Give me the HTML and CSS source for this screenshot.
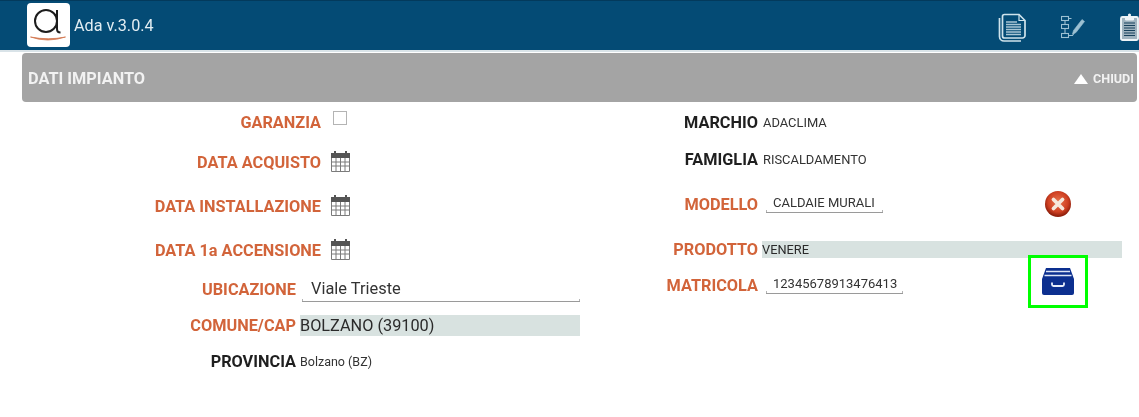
FILE: index.html
```html
<!DOCTYPE html>
<html lang="it">
<head>
<meta charset="utf-8">
<title>Ada</title>
<link rel="stylesheet" href="styles.css">
</head>
<body>
<header class="topbar">
  <div class="brand">
    <div class="logo">
      <svg width="43" height="44" viewBox="0 0 43 44">
        <circle cx="19" cy="18" r="11" fill="none" stroke="#1c1c1c" stroke-width="2"/>
        <path d="M30 7v19q0 3.500 3.500 3.500" fill="none" stroke="#1c1c1c" stroke-width="2"/>
        <path d="M3.500 34q17 6 35 0q-17 3.500-35 0z" fill="#d2764f" stroke="#d2764f" stroke-width=".8"/>
      </svg>
    </div>
    <span class="version">Ada v.3.0.4</span>
  </div>
  <nav class="tools">
    <svg class="tool-doc" width="29" height="30" viewBox="0 0 29 30" fill="none" stroke="#cfe3ec">
      <path d="M6.500 2.500h14.500l6 6v15a2.500 2.500 0 0 1-2.500 2.500H6.500a2 2 0 0 1-2-2V4.500a2 2 0 0 1 2-2z" stroke-width="1.700"/>
      <path d="M1.500 6v18.500a4.500 4.500 0 0 0 4.500 4.500h17" stroke-width="1.700"/>
      <path d="M21 2.500v6h6" stroke-width="1.200"/>
      <path d="M8 10h11M8 12.500h15M8 15h15M8 17.500h15M8 20h15M8 22.500h15" stroke="#a9c6d5" stroke-width="1.300"/>
    </svg>
    <svg class="tool-flow" width="24" height="24" viewBox="0 0 24 24" fill="none" stroke="#9cc0d2" stroke-width="1.100">
      <rect x=".500" y="1.500" width="7" height="4"/>
      <rect x=".500" y="9.500" width="7" height="4"/>
      <rect x=".500" y="18.500" width="7" height="4"/>
      <path d="M4 5.500v4M4 13.500v5M7.500 20.500h4l2-3M7.500 3.500h3"/>
      <path d="M12.500 15.500l8.500-11 2.500 2-8.500 11-3.500 1.500z" fill="#9cc0d2" stroke-width=".6"/>
    </svg>
    <svg class="tool-clip" width="19" height="28" viewBox="0 0 19 28" fill="none" stroke="#eef4f7">
      <rect x="1" y="4" width="17" height="23" rx="1.500" fill="#9fb3bf" stroke-width="1.900"/>
      <path d="M5.500 3.500h8V7h-8z" fill="#eef4f7"/>
      <circle cx="9.500" cy="2" r="1.600" fill="#eef4f7" stroke="none"/>
      <path d="M4 10h11M4 12.500h11M4 15h11M4 17.500h11M4 20h11M4 22.500h11" stroke="#17415c" stroke-width="1.100"/>
    </svg>
  </nav>
</header>

<section class="panel">
  <h2 class="panel-title">DATI IMPIANTO</h2>
  <div class="panel-close"><span class="triangle"></span>CHIUDI</div>
</section>

<main class="form">
  <div class="col col-left">
    <div class="row">
      <span class="label accent">GARANZIA</span>
      <span class="checkbox"></span>
    </div>
    <div class="row">
      <span class="label accent">DATA ACQUISTO</span>
      <svg class="cal" width="21" height="22" viewBox="0 0 21 22"><use href="#calendar"/></svg>
    </div>
    <div class="row">
      <span class="label accent">DATA INSTALLAZIONE</span>
      <svg class="cal" width="21" height="22" viewBox="0 0 21 22"><use href="#calendar"/></svg>
    </div>
    <div class="row">
      <span class="label accent">DATA 1a ACCENSIONE</span>
      <svg class="cal" width="21" height="22" viewBox="0 0 21 22"><use href="#calendar"/></svg>
    </div>
    <div class="row row-short">
      <span class="label accent">UBICAZIONE</span>
      <span class="input input-wide">Viale Trieste</span>
    </div>
    <div class="row row-short">
      <span class="label accent">COMUNE/CAP</span>
      <span class="readonly readonly-left">BOLZANO (39100)</span>
    </div>
    <div class="row row-short">
      <span class="label">PROVINCIA</span>
      <span class="small small-left">Bolzano (BZ)</span>
    </div>
  </div>

  <div class="col col-right">
    <div class="row">
      <span class="label">MARCHIO</span>
      <span class="small">ADACLIMA</span>
    </div>
    <div class="row">
      <span class="label">FAMIGLIA</span>
      <span class="small">RISCALDAMENTO</span>
    </div>
    <div class="row">
      <span class="label accent">MODELLO</span>
      <span class="input input-model">CALDAIE MURALI</span>
      <svg class="clear" width="28" height="28" viewBox="0 0 28 28">
        <defs>
          <radialGradient id="red" cx=".5" cy=".42" r=".55">
            <stop offset="0" stop-color="#e9764f"/>
            <stop offset=".7" stop-color="#cf4022"/>
            <stop offset="1" stop-color="#8f1f0c"/>
          </radialGradient>
        </defs>
        <circle cx="14" cy="14" r="13" fill="url(#red)"/>
        <path d="M9.500 9.500l9 9M18.500 9.500l-9 9" stroke="#f6e8dc" stroke-width="3.800" stroke-linecap="round"/>
      </svg>
    </div>
    <div class="row">
      <span class="label accent">PRODOTTO</span>
      <span class="readonly readonly-right">VENERE</span>
    </div>
    <div class="row">
      <span class="label accent">MATRICOLA</span>
      <span class="input input-model input-serial">12345678913476413</span>
      <button class="archive" type="button" aria-label="Archivio">
        <svg width="32" height="27" viewBox="0 0 32 27">
          <path d="M4 0h24l4 11v14q0 2-2 2H2q-2 0-2-2V11z" fill="#0c2f8f"/>
          <path d="M4 3.500h24M2.500 7.500h27" stroke="#dfe6f5" stroke-width="1.300"/>
          <path d="M10 14.500v2q0 1.500 1.500 1.500h9q1.500 0 1.500-1.500v-2" fill="none" stroke="#e8eefa" stroke-width="1.800"/>
        </svg>
      </button>
    </div>
  </div>
</main>

<svg class="defs" width="0" height="0" aria-hidden="true">
  <symbol id="calendar" viewBox="0 0 21 22">
    <path d="M1 3h3V1h2v2h9V1h2v2h3v5H1z" fill="#555"/>
    <path d="M1.500 8v13.500h18V8M1.500 12h18M1.500 16h18M6 8v13.500M10.500 8v13.500M15 8v13.500" fill="none" stroke="#7b7b7b" stroke-width="1"/>
  </symbol>
</svg>
</body>
</html>
```

FILE: styles.css
```css
* { box-sizing: border-box; }

html, body {
  margin: 0;
  width: 1139px;
  height: 417px;
  overflow: hidden;
  background: #fff;
}

body {
  font-family: Roboto, "Liberation Sans", sans-serif;
  color: #2a2a2a;
  filter: blur(.35px);
}

.defs { position: absolute; }

.topbar {
  height: 52px;
  padding: 2px 0 0 27px;
  display: flex;
  justify-content: space-between;
  background: #044b75;
  border-top: 1px solid #033a5c;
  border-bottom: 2px solid #d9e3e8;
  overflow: hidden;
}

.brand {
  display: flex;
  align-items: center;
  height: 44px;
  gap: 4px;
}

.logo {
  width: 43px;
  height: 44px;
  background: #fff;
  border-radius: 4px;
}

.logo svg { display: block; }

.version {
  color: #e2edf2;
  font-size: 16.200px;
}

.tools {
  display: flex;
  align-items: center;
  height: 47px;
}

.tool-doc { margin-right: 34px; }
.tool-flow { margin-right: 35px; }
.tool-clip { margin-right: 0; }

.panel {
  margin: 1px 2px 0 22px;
  height: 49px;
  padding: 2px 3px 0 6px;
  display: flex;
  justify-content: space-between;
  align-items: center;
  background: #a4a4a4;
  border-radius: 4px;
  color: #f2f2f2;
}

.panel-title {
  margin: 0;
  font-size: 16.300px;
  font-weight: 700;
}

.panel-close {
  display: flex;
  align-items: center;
  gap: 5px;
  font-size: 12.600px;
  font-weight: 700;
}

.triangle {
  width: 0;
  height: 0;
  border-left: 7px solid transparent;
  border-right: 7px solid transparent;
  border-bottom: 10px solid #fff;
}

.form { display: flex; }

.col { display: grid; }

.col-left {
  width: 580px;
  grid-template-rows: 40px 40px 48px 40px 38px 34px 38px;
}

.col-right {
  width: 542px;
  grid-template-rows: 40px 34px 56px 34px 38px;
}

.row {
  display: grid;
  grid-template-columns: 322px 1fr;
  align-items: center;
}

.row-short { grid-template-columns: 297px 1fr; }

.col-right .row { grid-template-columns: 179px 269px 60px 1fr; }

.label {
  padding-right: 1px;
  text-align: right;
  font-size: 16.300px;
  font-weight: 700;
  color: #1f1f1f;
}

.label.accent { color: #d2643a; }

.checkbox {
  display: block;
  width: 14px;
  height: 14px;
  margin: 0 0 9px 11px;
  border: 1px solid #b4b4b4;
}

.cal { margin: 0 0 2px 8px; }

.input {
  display: block;
  border-bottom: 1px solid #9a9a9a;
  background:
    linear-gradient(#b4b4b4, #b4b4b4) left bottom / 1px 2px no-repeat,
    linear-gradient(#b4b4b4, #b4b4b4) right bottom / 1px 2px no-repeat;
}

.input-wide {
  margin: 2px 0 0 5px;
  padding: 0 0 3px 9px;
  font-size: 16.400px;
  color: #333;
}

.input-model {
  justify-self: start;
  width: 117px;
  margin-left: 7px;
  padding: 0 0 2px 7px;
  font-size: 13px;
  color: #333;
}

.input-serial { width: 137px; }

.readonly {
  display: block;
  background: #d8e2e0;
  color: #2a2a2a;
}

.readonly-left {
  margin-left: 3px;
  font-size: 16.300px;
  line-height: 21px;
}

.readonly-right {
  grid-column: 2 / 5;
  width: 360px;
  margin-left: 3px;
  font-size: 12.800px;
  line-height: 17px;
}

.small {
  margin-left: 4px;
  font-size: 12.900px;
  color: #333;
}

.small-left {
  margin-left: 3px;
  font-size: 12.500px;
}

.clear { justify-self: center; }

.archive {
  justify-self: center;
  width: 60px;
  height: 53px;
  margin: -11px 0 -4px;
  padding: 0;
  display: flex;
  align-items: center;
  justify-content: center;
  background: #fff;
  border: 3px solid #0f0;
}
```
